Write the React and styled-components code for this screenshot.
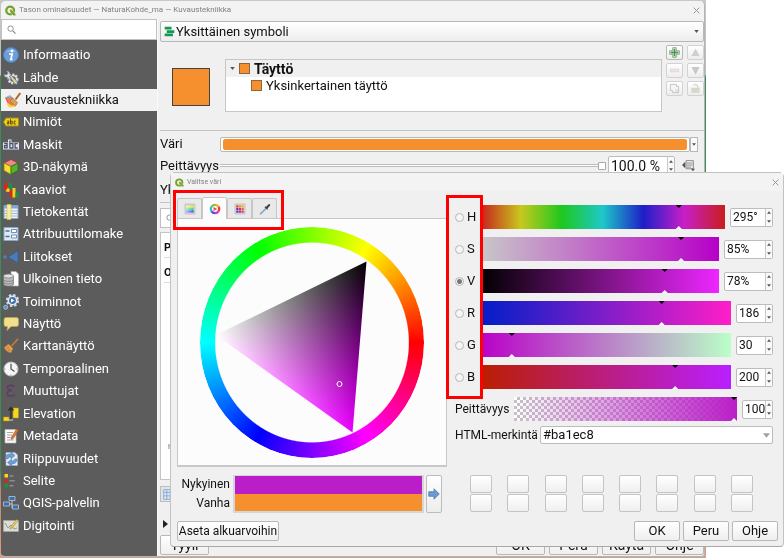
import React, { useState } from "react";
import styled, { createGlobalStyle, css } from "styled-components";

const Global = createGlobalStyle`
  * { box-sizing: border-box; }
  body { margin: 0; background: #fff; font-family: Roboto, "Noto Sans", sans-serif; font-size: 13px; line-height: 16px; color: #111; }
  button, input, select { font: inherit; color: inherit; margin: 0; padding: 0; }
  ul { list-style: none; margin: 0; padding: 0; }
`;

/* ---------- desktop and windows ---------- */

const Desktop = styled.div`
  position: relative;
  min-height: 100vh;
  display: flex;
  overflow: hidden;
`;

const MapBackdrop = styled.div`
  display: flex;
  width: calc(100% - 78px);
  padding: 1px;
  background: linear-gradient(#c9c7c9 0, #bdbdbd 75px, #3f8a57 76px, #3f8a57 470px, #b98a74 490px, #d89c80 100%);
`;

const MainWindow = styled.section`
  flex: 1;
  min-width: 0;
  display: flex;
  flex-direction: column;
  background: #f0f0f0;
  border-right: 1px solid #b4b4b4;
  border-bottom: 1px solid #b4b4b4;
  border-radius: 5px 5px 3px 4px;
  overflow: hidden;
`;

const TitleBar = styled.header`
  display: flex;
  align-items: center;
  flex: none;
  gap: 3px;
  height: 18px;
  padding: 0 4px;
  background: #f3f3f3;
  color: #808080;
  font-size: ${(p) => (p.$small ? "7px" : "8px")};
  line-height: 12px;
`;

const TitleText = styled.h1`
  flex: 1;
  margin: 0;
  font-size: inherit;
  font-weight: 400;
`;

const CloseButton = styled.button`
  display: flex;
  border: 0;
  background: none;
`;

const WindowBody = styled.div`
  flex: 1;
  display: flex;
  min-height: 0;
`;

/* ---------- side bar ---------- */

const Sidebar = styled.nav`
  flex: none;
  width: 157px;
  display: flex;
  flex-direction: column;
  background: #5c5c5c;
  border-right: 1px solid #fafafa;
`;

const SearchBox = styled.label`
  display: flex;
  align-items: center;
  height: ${(p) => p.$height};
  padding-left: 5px;
  background: #fff;
  border: 1px solid #c0c0c0;
  input { flex: 1; min-width: 0; border: 0; outline: 0; background: none; }
`;

const NavList = styled.ul`
  && {
    flex: 1;
    display: flex;
    flex-direction: column;
    padding: 4px 0 19px;
  }
`;

const NavItem = styled.li`
  flex: 1;
  display: flex;
`;

const NavButton = styled.button`
  flex: 1;
  display: flex;
  align-items: center;
  gap: 4px;
  padding: 0 0 0 2px;
  border: 0;
  background: none;
  color: #fff;
  text-align: left;
  ${(p) =>
    p.$active &&
    css`
      background: #f1f1f1;
      color: #111;
      padding-left: 4px;
    `}
`;

/* ---------- main pane ---------- */

const MainPane = styled.main`
  flex: 1;
  min-width: 0;
  display: flex;
  flex-direction: column;
  padding: 2px 0 1px 2px;
`;

const ComboBox = styled.div`
  display: flex;
  align-items: center;
  height: 21px;
  padding: 0 4px 0 3px;
  gap: 1px;
  background: linear-gradient(#fff, #ededed);
  border: 1px solid #b8b8b8;
  border-radius: 2px;
  select { flex: 1; appearance: none; border: 0; background: none; outline: 0; }
`;

const SymbolArea = styled.div`
  display: flex;
  align-items: flex-start;
  padding-top: 3px;
`;

const SymbolPreview = styled.div`
  width: 38px;
  height: 38px;
  margin: 23px 15px 0 12px;
  background: #f6902e;
  border: 1px solid #444;
`;

const Tree = styled.ul`
  && {
    flex: 1;
    height: 53px;
    margin: 14px 4px 0 0;
    background: #fff;
    border: 1px solid #c6c6c6;
  }
`;

const TreeRow = styled.li`
  display: flex;
  align-items: center;
  gap: 4px;
  height: 17px;
  padding-left: ${(p) => (p.$child ? "25px" : "4px")};
  background: ${(p) => (p.$child ? "#fff" : "#f0f0f0")};
  font-size: ${(p) => (p.$child ? "13px" : "14px")};
  font-weight: ${(p) => (p.$child ? 400 : 700)};
`;

const Chip = styled.span`
  width: 11px;
  height: 11px;
  background: #f6902e;
  border: 1px solid #8a6640;
`;

const ToolGrid = styled.div`
  display: grid;
  grid-template-columns: 17px 17px;
  grid-auto-rows: 15px;
  gap: 3px 4px;
`;

const ToolButton = styled.button`
  display: flex;
  align-items: center;
  justify-content: center;
  background: linear-gradient(#fff, #ededed);
  border: 1px solid ${(p) => (p.disabled ? "#d2d2d2" : "#b8b8b8")};
  border-radius: 2px;
`;

const Separator = styled.hr`
  width: 100%;
  height: 1px;
  margin: ${(p) => p.$margin};
  border: 0;
  background: #c4c4c4;
`;

const FieldRow = styled.div`
  display: flex;
  align-items: center;
  height: ${(p) => p.$height};
  padding-right: 6px;
`;

const FieldLabel = styled.label`
  width: 60px;
`;

const ColorButton = styled.button`
  flex: 1;
  height: 15px;
  padding: 1px 2px;
  background: #fff;
  border: 1px solid #b8b8b8;
  border-radius: 2px;
  &::before { content: ""; display: block; height: 11px; border-radius: 2px; background: #f6902e; }
`;

const DropButton = styled.button`
  display: flex;
  align-items: center;
  justify-content: center;
  width: 8px;
  height: 15px;
  background: #fafafa;
  border: 1px solid #b8b8b8;
`;

const PlainSlider = styled.input`
  flex: 1;
  min-width: 0;
  height: 9px;
  margin-right: 2px;
  && { margin-right: 2px; }
  appearance: none;
  background: linear-gradient(#fff, #fff) center / 100% 1px no-repeat, linear-gradient(#bcbcbc, #bcbcbc) center / 100% 3px no-repeat;
  &::-webkit-slider-thumb {
    appearance: none;
    width: 8px;
    height: 8px;
    background: #fff;
    border: 1px solid #a8a8a8;
    border-radius: 1px;
  }
`;

const SpinFrame = styled.span`
  flex: none;
  display: flex;
  width: ${(p) => p.$width};
  height: 19px;
  background: #fff;
  border: 1px solid #bcbcbc;
  border-radius: 2px;
  font-size: ${(p) => (p.$large ? "14px" : "12px")};
  input { flex: 1; min-width: 0; width: 0; padding-left: 2px; border: 0; outline: 0; background: none; }
`;

const SpinButtons = styled.span`
  display: flex;
  flex-direction: column;
  width: 7px;
  border-left: 1px solid #c8c8c8;
  button { flex: 1; display: flex; align-items: center; justify-content: center; border: 0; background: #fafafa; }
`;

const IconButton = styled.button`
  && { margin: 0 3px 0 7px; }
  display: flex;
  border: 0;
  background: none;
`;

const SymbolList = styled.ul`
  && {
    flex: 1;
    margin-top: 4px;
    padding: 6px 3px;
    background: #fff;
    border: 1px solid #c4c4c4;
    display: flex;
    flex-direction: column;
  }
`;

const SymbolHeading = styled.li`
  height: 25px;
  font-weight: 700;
  font-size: 11px;
  line-height: 18px;
  &::after { content: ""; display: block; border-bottom: 1px solid #dcdcdc; }
`;

const SymbolCaption = styled.li`
  margin-top: auto;
  padding: 0 0 18px 4px;
  font-size: 8px;
  color: #777;
`;

const ViewBar = styled.div`
  display: flex;
  margin-top: 6px;
`;

const ViewButton = styled.button`
  display: flex;
  align-items: center;
  width: 22px;
  height: 16px;
  padding-left: 2px;
  background: #e3e3e3;
  border: 1px solid #bdbdbd;
`;

const Disclosure = styled.button`
  && { margin: 18px 0 0 3px; }
  display: flex;
  align-self: flex-start;
  border: 0;
  background: none;
`;

const Footer = styled.footer`
  display: flex;
  gap: ${(p) => p.$gap};
  margin-top: ${(p) => p.$top};
  font-size: ${(p) => (p.$large ? "14px" : "13px")};
`;

const Spacer = styled.span`
  flex: 1;
`;

const PushButton = styled.button`
  min-width: ${(p) => p.$min};
  height: 20px;
  background: linear-gradient(#fff, #efefef);
  border: 1px solid #b8b8b8;
  border-radius: 2px;
  white-space: nowrap;
  ${(p) => p.$compact && css`font-size: 12px;`}
`;

/* ---------- colour dialog ---------- */

const ColorDialog = styled.section`
  position: absolute;
  top: 172px;
  left: 170px;
  right: 0;
  background: #f0f0f0;
  border: 1px solid #c2c2c2;
  border-bottom-color: #a8a8a8;
  border-radius: 5px 5px 4px 4px;
`;

const Highlight = styled.div`
  position: absolute;
  left: ${(p) => p.$left};
  top: ${(p) => p.$top};
  width: ${(p) => p.$width};
  height: ${(p) => p.$height};
  border: 3px solid #ff0000;
  pointer-events: none;
`;

const DialogBody = styled.div`
  padding: 6px 5px 5px 6px;
`;

const Columns = styled.div`
  display: grid;
  grid-template-columns: 270px minmax(0, 1fr);
  gap: 8px;
`;

const Tabs = styled.div`
  display: flex;
  align-items: flex-end;
  height: 21px;
`;

const Tab = styled.button`
  display: flex;
  align-items: center;
  justify-content: center;
  width: 25px;
  height: ${(p) => (p.$active ? "22px" : "20px")};
  && { margin-bottom: ${(p) => (p.$active ? "-1px" : "0")}; }
  background: ${(p) => (p.$active ? "#fcfcfc" : "#e9e9e9")};
  border: 1px solid #c6c6c6;
  border-bottom-width: 0;
  border-radius: 2px 2px 0 0;
  z-index: 1;
`;

const WheelPanel = styled.div`
  display: flex;
  justify-content: center;
  padding: 8px 0 7px;
  background: #fcfcfc;
  border: 1px solid #c8c8c8;
  border-bottom-width: 2px;
`;

const WheelBox = styled.div`
  display: grid;
  > * { grid-area: 1 / 1; }
`;

const HueRing = styled.div`
  width: 224px;
  height: 231px;
  border-radius: 50%;
  background: conic-gradient(from 90deg, #f00, #f0f, #00f, #0ff, #0f0, #ff0, #f00);
  mask: radial-gradient(closest-side, transparent 86%, #000 87%);
`;

const Channels = styled.div`
  display: flex;
  flex-direction: column;
  gap: 8px;
  padding: 8px 5px 0 0;
`;

const ChannelRow = styled.div`
  display: flex;
  align-items: center;
  height: 24px;
  gap: 5px;
`;

const ChannelLabel = styled.label`
  display: flex;
  align-items: center;
  gap: 3px;
  width: 20px;
`;

const Radio = styled.input`
  appearance: none;
  flex: none;
  width: 9px;
  height: 9px;
  border: 1px solid #b6b6b6;
  border-radius: 50%;
  background: #f6f6f6;
  &:checked { background: radial-gradient(#777 0 2px, #f6f6f6 3px); }
`;

const Ramp = styled.input`
  appearance: none;
  flex: 1;
  min-width: 0;
  height: 24px;
  background: ${(p) => p.$fill};
  &::-webkit-slider-thumb {
    appearance: none;
    width: 6px;
    height: 24px;
    background: linear-gradient(#000 50%, #fff 50%);
    clip-path: polygon(0 0, 6px 0, 3px 3px, 3px 21px, 6px 24px, 0 24px, 3px 21px, 3px 3px);
  }
`;

const OpacityLabel = styled.label`
  width: 54px;
  font-size: 12px;
`;

const HtmlRow = styled.div`
  display: flex;
  align-items: center;
  gap: 5px;
  margin-top: -3px;
  label { width: 80px; font-size: 12px; white-space: nowrap; }
`;

const HtmlField = styled.span`
  flex: 1;
  display: flex;
  align-items: center;
  height: 18px;
  padding: 0 2px;
  background: #fff;
  border: 1px solid #bcbcbc;
  border-radius: 2px;
  input { flex: 1; min-width: 0; border: 0; outline: 0; background: none; }
  button { display: flex; border: 0; background: none; }
`;

const SwatchRow = styled.div`
  display: flex;
  align-items: stretch;
  height: 38px;
  margin-top: 8px;
`;

const CompareLabels = styled.div`
  display: flex;
  flex-direction: column;
  justify-content: space-around;
  width: 53px;
  text-align: right;
  font-size: 12px;
  line-height: 19px;
`;

const CompareSwatch = styled.div`
  width: 191px;
  margin: 0 2px 0 3px;
  background: linear-gradient(#ba1ec8 50%, #f6902e 50%);
  border: 2px solid #d6d6d6;
  border-top-width: 1px;
`;

const AddButton = styled.button`
  display: flex;
  align-items: center;
  justify-content: center;
  width: 16px;
  background: linear-gradient(#fff, #ededed);
  border: 1px solid #bcbcbc;
  border-radius: 2px;
`;

const SwatchGrid = styled.div`
  flex: 1;
  display: grid;
  grid-template-columns: repeat(8, 22px);
  grid-auto-rows: 18px;
  row-gap: 1px;
  justify-content: space-between;
  margin: 0 25px 0 28px;
  button { border: 1px solid #c4c4c4; border-radius: 2px; background: linear-gradient(#fff, #efefef); }
`;

/* ---------- drawings ---------- */

const Svg = ({ size = 16, w, h, box = "0 0 16 16", children }) => (
  <svg width={w || size} height={h || size} viewBox={box} fill="none" aria-hidden="true">
    {children}
  </svg>
);

const Arrow = ({ up, color = "#555", w = 5, h = 3 }) => (
  <Svg w={w} h={h} box="0 0 6 4">
    <path d={up ? "M0 4h6L3 0z" : "M0 0h6L3 4z"} fill={color} />
  </Svg>
);

const QgisLogo = ({ size }) => (
  <Svg size={size}>
    <circle cx="7.5" cy="8" r="5.6" stroke="#6ea52e" strokeWidth="3.4" />
    <path d="M7.5 7.5h3l5 5.5v2.5h-3L7.5 10.3z" fill="#6ea52e" stroke="#f3f3f3" strokeWidth=".7" />
    <path d="M7 6.5h3v2l-1.5 1.5L7 9z" fill="#ee7913" />
  </Svg>
);

const Cross = ({ size = 7 }) => (
  <Svg size={size} box="0 0 8 8">
    <path d="M.7.7l6.6 6.6M7.3.7L.7 7.3" stroke="#8a8a8a" strokeWidth="1" />
  </Svg>
);

const Magnifier = () => (
  <Svg size={9} box="0 0 10 10">
    <circle cx="4" cy="4" r="3" stroke="#888" strokeWidth="1" />
    <path d="M6.2 6.2L9.5 9.5" stroke="#888" strokeWidth="1.3" />
  </Svg>
);

const drawings = {
  info: (
    <>
      <circle cx="8" cy="8" r="7.5" fill="#6c9fd8" stroke="#4a7fbd" />
      <path d="M3 5a6 5 0 0 1 10 0" fill="#a9c8ee" opacity=".5" />
      <circle cx="9" cy="4" r="1.4" fill="#fff" />
      <path d="M6 7h3.2l-1.3 5.3h1.6" stroke="#fff" strokeWidth="1.7" />
    </>
  ),
  source: (
    <>
      <circle cx="10" cy="9" r="4.6" stroke="#d3d9de" strokeWidth="1.8" strokeDasharray="2.2 1.2" />
      <circle cx="10" cy="9" r="3.4" stroke="#e6eaee" strokeWidth="1.2" />
      <path d="M3.5 .8L5 3.300 3.500 5 1 4.300q.2 3.400 3.600 3.200L7 9.500l2-2.200L7.200 5Q7 1.400 3.500.8z" fill="#dfe3e6" stroke="#777c80" strokeWidth=".5" />
      <path d="M6.500 6.500l2-1 6 6.500-.5 2.500-2.500-.8z" fill="#ecd27c" stroke="#4d7fb0" strokeWidth=".9" />
    </>
  ),
  brush: (
    <>
      <path d="M0 5.500l5-2.500 4 4-5 4z" fill="#7db4e6" />
      <path d="M0 5.500l3 .5 3 5-2 3.500z" fill="#ea6047" />
      <path d="M2 12.500l4-3 6 2-2 3.500-6 .5z" fill="#f6d445" />
      <path d="M2 6l5-1 4 6-4 3-3-2z" fill="#ee7f4d" />
      <path d="M7.500 6l5 4.500-2 3.500-5.500-4.500z" fill="#d9a25c" stroke="#99622a" strokeWidth=".6" />
      <path d="M10.500 7.500L15.300 1" stroke="#a8682d" strokeWidth="2" />
    </>
  ),
  label: (
    <>
      <path d="M.5 8L3 4h12.500v8H3z" fill="#f2d11e" stroke="#a98d0d" />
      <path d="M4.200 7h1.600v3H4.400V8.600h1.400M7.500 5.200V10H9.200V7.200H7.500M12.800 7.200h-1.700V10h1.700" stroke="#4b430b" strokeWidth=".9" />
    </>
  ),
  mask: (
    <>
      <path d="M0 5.500h5V2.500h3.500v3H16v7H0z" fill="#dfe6f4" />
      <path d="M1.200 6.600h2.900v4.300H1.500V8.700h2.600M6.900 3.500V11h3V6.600h-3M14.700 6.600h-2.600V11h2.600" stroke="#4a5266" strokeWidth="1.300" />
    </>
  ),
  cube: (
    <>
      <path d="M8 .5L15 4 8 7.500 1 4z" fill="#f08a8a" stroke="#a93232" strokeWidth=".8" />
      <path d="M1 4l7 3.500v8l-7-4z" fill="#f4de2f" stroke="#8f8212" strokeWidth=".8" />
      <path d="M15 4L8 7.500v8l7-4z" fill="#54b32c" stroke="#2d6f14" strokeWidth=".8" />
    </>
  ),
  chart: (
    <>
      <path d="M5 5V.5A4.500 4.500 0 0 0 2.500 8.500z" fill="#e2231a" />
      <path d="M5.500 5V.5A4.500 4.500 0 0 1 8.500 8z" fill="#16963f" />
      <path d="M5 5.500l3 3.500a4.500 4.500 0 0 1-5.500 0z" fill="#f2cf1f" />
      <path d="M6.500 8h3v7.500h-3z" fill="#e2231a" />
      <path d="M9.500 6h3v9.500h-3z" fill="#f2cf1f" />
      <path d="M12.500 10.500h3v5h-3z" fill="#16963f" />
    </>
  ),
  fields: (
    <>
      <path d="M1 1.500h14v13H1z" fill="#eef3fa" stroke="#85a3c8" />
      <path d="M1 2h14v2.500H1z" fill="#7fa8d6" />
      <path d="M1 7h14M1 9.500h14M1 12h14" stroke="#9db6d4" />
      <path d="M4 .5h4v15H4z" fill="#f7ef9d" stroke="#d3c53a" strokeWidth=".6" />
    </>
  ),
  form: (
    <>
      <path d="M1 1.500h14v13H1z" fill="#dfe9f5" stroke="#8ba7c9" />
      <path d="M2.500 5h4M2.500 10.500h4" stroke="#4e7199" strokeWidth="1.400" />
      <path d="M8.500 3.500h5v3h-5zM8.500 9h5v3h-5z" fill="#fff" stroke="#6e8fb8" />
    </>
  ),
  join: (
    <>
      <circle cx="2" cy="8" r="1.700" fill="#5080ba" />
      <path d="M5 8l10-6v12z" fill="#4a7cb8" stroke="#2f6098" strokeWidth=".7" />
    </>
  ),
  database: (
    <>
      <path d="M8 .5h5l2.500 2.500v12H8z" fill="#fff" stroke="#aaa" strokeWidth=".7" />
      <path d="M.5 5v8c0 3 10 3 10 0V5z" fill="#b9b9b9" stroke="#707070" strokeWidth=".7" />
      <ellipse cx="5.500" cy="5" rx="5" ry="2" fill="#e2e2e2" stroke="#707070" strokeWidth=".7" />
      <path d="M.5 8.500c0 2.500 10 2.500 10 0M.5 11c0 2.500 10 2.500 10 0" stroke="#777" strokeWidth=".7" />
    </>
  ),
  gears: (
    <>
      <circle cx="9.500" cy="6.500" r="5.600" stroke="#cfdcea" strokeWidth="2" strokeDasharray="2.400 2" />
      <circle cx="9.500" cy="6.500" r="4.200" fill="#3f6fa5" stroke="#dfe8f2" strokeWidth="1.600" />
      <path d="M8 4.500l3.500 2-3.500 2z" fill="#fff" />
      <circle cx="2.700" cy="13.300" r="2" fill="#5f8cc0" stroke="#a5c0de" />
    </>
  ),
  bubble: <path d="M3 1.500h10.500q2 0 2 2v5q0 2-2 2H8L4 14.500l.5-4H3q-2 0-2-2v-5q0-2 2-2z" fill="#f0e08d" stroke="#bba649" strokeWidth=".8" />,
  broom: (
    <>
      <path d="M8.500 8L15 .8" stroke="#c07a2c" strokeWidth="1.800" />
      <path d="M5.500 6l4.500 4.500-2 4.500Q3 14 1 9.500z" fill="#e5a65a" stroke="#a86a26" strokeWidth=".7" />
      <path d="M4.500 8l3 5M3 9l3 4" stroke="#a86a26" strokeWidth=".6" />
    </>
  ),
  clock: (
    <>
      <circle cx="8" cy="8" r="7" fill="#f6f6f6" stroke="#c4c4c4" />
      <path d="M8 3v5l3.500 2.500" stroke="#555" strokeWidth="1.300" />
      <path d="M8 1.500v1M8 13.500v1M1.500 8h1M13.500 8h1" stroke="#999" />
    </>
  ),
  epsilon: <path d="M11.500 3.500Q6 .8 4.500 4q-.5 3 4.500 3.500Q3.500 8 4 11q1.500 3.500 8 1" stroke="#633d69" strokeWidth="1.800" />,
  elevation: (
    <>
      <path d="M10 2h5.500v10H10zM.5 11h5.500v4H.5z" fill="#f4d822" stroke="#a9940f" strokeWidth=".6" />
      <path d="M8 14V2M5.500 4.500L8 1.500l2.500 3" stroke="#2a2a2a" strokeWidth="1.200" />
      <path d="M5.500 14H10" stroke="#ddd" />
    </>
  ),
  metadata: (
    <>
      <path d="M2 1.500h11v13.500H2z" fill="#fbfbfb" stroke="#b5b5b5" strokeWidth=".7" />
      <path d="M4 4.500h6M4 7h5M4 9.500h4M4 12h7" stroke="#9a9a9a" strokeWidth=".9" />
      <path d="M13.500 1l2 1.200-5 8-2.200 1.300.2-2.500z" fill="#df7b39" stroke="#9c4b18" strokeWidth=".5" />
    </>
  ),
  dependencies: (
    <>
      <path d="M3 1.500h9l2.500 2.500v10.500H3z" fill="#e5edf7" stroke="#9db2cc" strokeWidth=".7" />
      <path d="M2 7q1-4.500 6-4V1l4 3.500-4 3.300V6Q5 5.500 5 8zM14 8q0 5-5.500 5v2l-4-3.500 4-3.300v2q3 0 3-2.200z" fill="#6f9ed4" stroke="#3f6ea5" strokeWidth=".5" />
    </>
  ),
  legend: (
    <>
      <path d="M1.500 1h3.500v3.500H1.500z" fill="#f4d822" />
      <path d="M1.500 6h3.500v3.500H1.500z" fill="#e2231a" />
      <path d="M1.500 11h3.500v3.500H1.500z" fill="#16963f" />
      <path d="M6.500 3h4M6.500 7.800h5.500M6.500 12.800h4" stroke="#a3a3a3" />
    </>
  ),
  server: (
    <>
      <path d="M3 9h6v4h5M9 9V4" stroke="#c6c6c6" />
      <path d="M6 1.500h6v4H6zM.5 7h6v4h-6zM9.500 10h6v4h-6z" fill="#3d6ea8" stroke="#b6c8dd" strokeWidth=".8" />
    </>
  ),
  digitize: (
    <>
      <path d="M.5 2.500h15v11H.5z" fill="#dcdcd6" stroke="#a6a6a0" strokeWidth=".7" />
      <path d="M2 5l3 5 3-3 3 4 3-1" stroke="#9b9b95" />
      <path d="M13.500 1.500l1.500 1-6 7.500-2 1 .5-2z" fill="#f0d04e" stroke="#8c7420" strokeWidth=".5" />
    </>
  ),
};

const navItems = [
  ["info", "Informaatio"],
  ["source", "Lähde"],
  ["brush", "Kuvaustekniikka"],
  ["label", "Nimiöt"],
  ["mask", "Maskit"],
  ["cube", "3D-näkymä"],
  ["chart", "Kaaviot"],
  ["fields", "Tietokentät"],
  ["form", "Attribuuttilomake"],
  ["join", "Liitokset"],
  ["database", "Ulkoinen tieto"],
  ["gears", "Toiminnot"],
  ["bubble", "Näyttö"],
  ["broom", "Karttanäyttö"],
  ["clock", "Temporaalinen"],
  ["epsilon", "Muuttujat"],
  ["elevation", "Elevation"],
  ["metadata", "Metadata"],
  ["dependencies", "Riippuvuudet"],
  ["legend", "Selite"],
  ["server", "QGIS-palvelin"],
  ["digitize", "Digitointi"],
];

const tools = [
  ["Lisää", false, <path key="a" d="M5.500 1h5v4.500H15v5h-4.500V15h-5v-4.500H1v-5h4.500z" fill="#d3e6d3" stroke="#6da070" strokeWidth="1.200" />, <path key="b" d="M8 3v10M3 8h10" stroke="#4f8b54" strokeWidth="2" />],
  ["Ylös", true, <path key="a" d="M8 2l6 11H2z" fill="#cdd0d2" />],
  ["Poista", true, <path key="a" d="M2 6h12v4H2z" fill="#f0e4e4" stroke="#d8cccc" />],
  ["Alas", true, <path key="a" d="M8 14L2 3h12z" fill="#c6c9cb" />],
  ["Monista", true, <path key="a" d="M2 2h9v3h3v9H5v-3H2z" fill="#f4f4f4" stroke="#c2c2c2" strokeWidth="1.300" />, <path key="b" d="M9 9h4v4H9z" fill="#e4e2cd" />],
  ["Lukitse", true, <path key="a" d="M2 7h12v7H2z" fill="#d9d6c6" />, <path key="b" d="M5 4q3-4 6 0v3" stroke="#d0d0ca" strokeWidth="1.600" />],
];

const paletteColors = ["#e8362c", "#ee8d2e", "#f1a62e", "#7a2c9e", "#e02d72", "#e26a2a", "#4a3cb0", "#9c2fa5", "#c5387a"];

const tabs = [
  [
    "Väriramppi",
    <>
      <defs>
        <linearGradient id="rampHue" x1="0" y1="0" x2="0" y2="1">
          <stop offset="0" stopColor="#f0a050" />
          <stop offset=".2" stopColor="#e8f050" />
          <stop offset=".45" stopColor="#30e060" />
          <stop offset=".65" stopColor="#30b0f0" />
          <stop offset=".85" stopColor="#5040e8" />
          <stop offset="1" stopColor="#c040e0" />
        </linearGradient>
        <linearGradient id="rampFade">
          <stop offset="0" stopColor="#fff" stopOpacity=".6" />
          <stop offset="1" stopColor="#fff" stopOpacity="0" />
        </linearGradient>
      </defs>
      <path d="M1.500 1.500h13v13h-13z" fill="#eee" stroke="#a9a9a9" />
      <path d="M3 3h10v10H3z" fill="url(#rampHue)" />
      <path d="M3 3h10v10H3z" fill="url(#rampFade)" />
    </>,
  ],
  [
    "Väripyörä",
    <>
      <path d="M8 2.500a5.500 5.500 0 0 1 4.800 2.700" stroke="#f0a52e" strokeWidth="3" />
      <path d="M12.800 5.200a5.500 5.500 0 0 1 0 5.600" stroke="#ee3c2e" strokeWidth="3" />
      <path d="M12.800 10.800A5.500 5.500 0 0 1 8 13.500" stroke="#d63cc6" strokeWidth="3" />
      <path d="M8 13.500a5.500 5.500 0 0 1-4.800-2.700" stroke="#5a4be0" strokeWidth="3" />
      <path d="M3.200 10.800a5.500 5.500 0 0 1 0-5.600" stroke="#35b9e0" strokeWidth="3" />
      <path d="M3.200 5.200A5.500 5.500 0 0 1 8 2.500" stroke="#5fcf45" strokeWidth="3" />
      <path d="M6 5.300L11 8l-5 2.700z" fill="#e2504e" />
    </>,
  ],
  [
    "Värimallit",
    <>
      <path d="M1.500 1.500h13v13h-13z" fill="#eee" stroke="#a9a9a9" />
      {paletteColors.map((c, i) => (
        <rect key={c} x={3 + (i % 3) * 3.5} y={3 + Math.floor(i / 3) * 3.5} width="3" height="3" fill={c} />
      ))}
    </>,
  ],
  [
    "Värinpoimija",
    <>
      <path d="M9 6.500L3 12.500l-1.500 2.500L4 13.500l6-6z" fill="#b8d4ee" stroke="#6b7f95" strokeWidth=".9" />
      <path d="M8 5l3.500 3.500" stroke="#3a3f46" strokeWidth="1.600" />
      <path d="M10.500 6L13.500 2.800" stroke="#3a3f46" strokeWidth="2.800" strokeLinecap="round" />
    </>,
  ],
];

const channels = [
  ["H", "295°", 295, 360, "43px", "linear-gradient(90deg, #c81e1e, #c8c81e, #1ec81e, #1ec8c8, #1e1ec8, #c81ec8, #c81e1e)"],
  ["S", "85%", 85, 100, "49px", "linear-gradient(90deg, #c8c8c8, #b700c8)"],
  ["V", "78%", 78, 100, "49px", "linear-gradient(90deg, #000, #ee26ff)"],
  ["R", "186", 186, 255, "37px", "linear-gradient(90deg, #001ec8, #ff1ec8)"],
  ["G", "30", 30, 255, "37px", "linear-gradient(90deg, #ba00c8, #baffc8)"],
  ["B", "200", 200, 255, "37px", "linear-gradient(90deg, #ba1e00, #ba1eff)"],
];

const opacityFill =
  "linear-gradient(90deg, rgba(186,30,200,0), #ba1ec8), repeating-conic-gradient(#c4c4c4 0 25%, #fff 0 50%) 0 0 / 6px 6px";

/* ---------- parts ---------- */

const Spin = ({ label, value, width, large }) => (
  <SpinFrame $width={width} $large={large}>
    <input aria-label={label} defaultValue={value} />
    <SpinButtons>
      <button type="button" aria-label="+"><Arrow up w={4} /></button>
      <button type="button" aria-label="−"><Arrow w={4} /></button>
    </SpinButtons>
  </SpinFrame>
);

const TriangleLayers = styled.g`
  isolation: isolate;
  rect { mix-blend-mode: plus-lighter; }
`;

const ColorWheel = () => (
  <WheelBox>
    <HueRing />
    <svg width="224" height="231" viewBox="0 0 224 231" aria-hidden="true">
      <defs>
        <linearGradient id="whiteShare" gradientUnits="userSpaceOnUse" x1="16" y1="108" x2="159.5" y2="119.7">
          <stop offset="0" stopColor="#fff" />
          <stop offset="1" stopColor="#000" />
        </linearGradient>
        <linearGradient id="hueShare" gradientUnits="userSpaceOnUse" x1="152.5" y1="205.5" x2="87.8" y2="72.9">
          <stop offset="0" stopColor="#ea00ff" />
          <stop offset="1" stopColor="#000" />
        </linearGradient>
        <clipPath id="triangle">
          <path d="M16 108L166.500 34.500 152.500 205.500z" />
        </clipPath>
      </defs>
      <TriangleLayers clipPath="url(#triangle)">
        <rect width="224" height="231" fill="#000" />
        <rect width="224" height="231" fill="url(#whiteShare)" />
        <rect width="224" height="231" fill="url(#hueShare)" />
      </TriangleLayers>
      <circle cx="139.5" cy="157" r="2.5" fill="none" stroke="#fff" />
      <path d="M153 205.500L158.500 220" stroke="#fff" strokeWidth="1.300" />
    </svg>
  </WheelBox>
);

function MainContent() {
  return (
    <MainPane>
      <ComboBox>
        <Svg size={11}>
          <path d="M1 1h10v4H1zM4 6h11v4H4zM1 11h12v4H1z" fill="#149954" />
        </Svg>
        <select aria-label="Symbolityyppi"><option>Yksittäinen symboli</option></select>
        <Arrow />
      </ComboBox>
      <SymbolArea>
        <SymbolPreview />
        <Tree>
          <TreeRow><Arrow /><Chip />Täyttö</TreeRow>
          <TreeRow $child><Chip />Yksinkertainen täyttö</TreeRow>
        </Tree>
        <ToolGrid>
          {tools.map(([name, off, ...art]) => (
            <ToolButton key={name} type="button" aria-label={name} disabled={off}><Svg size={11}>{art}</Svg></ToolButton>
          ))}
        </ToolGrid>
      </SymbolArea>
      <Separator $margin="18px 0 4px" />
      <FieldRow $height="18px">
        <FieldLabel htmlFor="fill">Väri</FieldLabel>
        <ColorButton id="fill" type="button" />
        <DropButton type="button" aria-label="Värivalikko"><Arrow w={4} /></DropButton>
      </FieldRow>
      <FieldRow $height="25px">
        <FieldLabel htmlFor="opacity">Peittävyys</FieldLabel>
        <PlainSlider id="opacity" type="range" defaultValue="100" />
        <Spin label="Peittävyys" value="100.0 %" width="67px" large />
        <IconButton type="button" aria-label="Ohitus">
          <Svg size={13}>
            <path d="M5 2h9v10H5zM6 5h7M6 7.500h7M6 10h5" stroke="#777" />
            <path d="M0 7.500l4-4v8zM11 12h5l-2.500 3z" fill="#555" />
          </Svg>
        </IconButton>
      </FieldRow>
      <FieldRow $height="24px">Yk</FieldRow>
      <Separator $margin="0 0 5px" />
      <SearchBox $height="20px"><Magnifier /><input aria-label="Suodata symbolit" /></SearchBox>
      <SymbolList>
        <SymbolHeading>P</SymbolHeading>
        <SymbolHeading>O</SymbolHeading>
        <SymbolCaption>h</SymbolCaption>
      </SymbolList>
      <ViewBar>
        <ViewButton type="button" aria-label="Kuvakenäkymä">
          <Svg size={11}><path d="M1 1h14v14H1zM1 5h14M1 10h14M5.500 1v14M10.500 1v14" stroke="#6c98cf" fill="#dbe7f5" /></Svg>
        </ViewButton>
      </ViewBar>
      <Disclosure type="button" aria-label="Tason piirto">
        <Svg w={5} h={8} box="0 0 5 8"><path d="M0 0l5 4-5 4z" fill="#222" /></Svg>
      </Disclosure>
      <Footer $gap="4px" $top="7px" $large>
        <PushButton type="button" $min="49px">Tyyli</PushButton>
        <Spacer />
        {["OK", "Peru", "Käytä", "Ohje"].map((t) => (
          <PushButton key={t} type="button" $min="49px">{t}</PushButton>
        ))}
      </Footer>
    </MainPane>
  );
}

function ColorPicker() {
  const [channel, setChannel] = useState("V");
  return (
    <ColorDialog role="dialog" aria-label="Valitse väri">
      <TitleBar $small>
        <QgisLogo size={9} />
        <TitleText as="h2">Valitse väri</TitleText>
        <CloseButton type="button" aria-label="Sulje"><Cross /></CloseButton>
      </TitleBar>
      <DialogBody>
        <Columns>
          <div>
            <Tabs role="tablist">
              {tabs.map(([name, art], i) => (
                <Tab key={name} type="button" role="tab" aria-label={name} aria-selected={i === 1} $active={i === 1}>
                  <Svg size={12}>{art}</Svg>
                </Tab>
              ))}
            </Tabs>
            <WheelPanel><ColorWheel /></WheelPanel>
          </div>
          <Channels>
            {channels.map(([name, text, value, max, width, fill]) => (
              <ChannelRow key={name}>
                <ChannelLabel>
                  <Radio type="radio" name="channel" checked={channel === name} onChange={() => setChannel(name)} />
                  {name}
                </ChannelLabel>
                <Ramp type="range" aria-label={name} max={max} defaultValue={value} $fill={fill} />
                <Spin label={name} value={text} width={width} />
              </ChannelRow>
            ))}
            <ChannelRow>
              <OpacityLabel htmlFor="alpha">Peittävyys</OpacityLabel>
              <Ramp id="alpha" type="range" defaultValue="100" $fill={opacityFill} />
              <Spin label="Peittävyys" value="100" width="31px" />
            </ChannelRow>
            <HtmlRow>
              <label htmlFor="html">HTML-merkintä</label>
              <HtmlField>
                <input id="html" defaultValue="#ba1ec8" />
                <button type="button" aria-label="Muoto"><Arrow color="#a0a0a0" w={7} h={5} /></button>
              </HtmlField>
            </HtmlRow>
          </Channels>
        </Columns>
        <SwatchRow>
          <CompareLabels><span>Nykyinen</span><span>Vanha</span></CompareLabels>
          <CompareSwatch />
          <AddButton type="button" aria-label="Lisää väri">
            <Svg size={12}><path d="M1 5h7V1l7 7-7 7v-4H1z" fill="#6b9bd0" stroke="#4776aa" /></Svg>
          </AddButton>
          <SwatchGrid>
            {Array.from({ length: 16 }, (_, i) => (
              <button key={i} type="button" aria-label={`Väri ${i + 1}`} />
            ))}
          </SwatchGrid>
        </SwatchRow>
        <Footer $gap="3px" $top="8px">
          <PushButton type="button" $min="102px" $compact>Aseta alkuarvoihin</PushButton>
          <Spacer />
          {["OK", "Peru", "Ohje"].map((t) => (
            <PushButton key={t} type="button" $min="46px">{t}</PushButton>
          ))}
        </Footer>
      </DialogBody>
      <Highlight $left="2px" $top="17px" $width="111px" $height="40px" />
      <Highlight $left="275px" $top="22px" $width="37px" $height="204px" />
    </ColorDialog>
  );
}

export default function App() {
  const [active, setActive] = useState("brush");
  return (
    <Desktop>
      <Global />
      <MapBackdrop>
        <MainWindow>
          <TitleBar>
            <QgisLogo size={11} />
            <TitleText>Tason ominaisuudet — NaturaKohde_ma — Kuvaustekniikka</TitleText>
            <CloseButton type="button" aria-label="Sulje"><Cross /></CloseButton>
          </TitleBar>
          <WindowBody>
            <Sidebar>
              <SearchBox $height="21px"><Magnifier /><input aria-label="Haku" /></SearchBox>
              <NavList>
                {navItems.map(([icon, name]) => (
                  <NavItem key={icon}>
                    <NavButton type="button" $active={active === icon} onClick={() => setActive(icon)}>
                      <Svg size={16}>{drawings[icon]}</Svg>
                      {name}
                    </NavButton>
                  </NavItem>
                ))}
              </NavList>
            </Sidebar>
            <MainContent />
          </WindowBody>
        </MainWindow>
      </MapBackdrop>
      <ColorPicker />
    </Desktop>
  );
}
